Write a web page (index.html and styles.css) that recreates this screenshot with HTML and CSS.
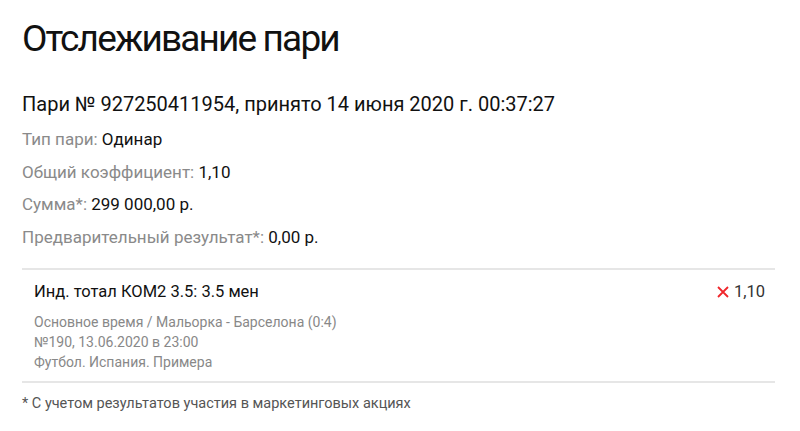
FILE: index.html
```html
<!DOCTYPE html>
<html lang="ru">
<head>
    <meta charset="UTF-8">
    <title>Отслеживание пари</title>
    <link rel="stylesheet" href="styles.css">
</head>
<body>
    <div class="page">
        <h1 class="title">Отслеживание пари</h1>

        <p class="bet-number">Пари № 927250411954, принято 14 июня 2020 г. 00:37:27</p>

        <ul class="info">
            <li><span class="label">Тип пари:</span> Одинар</li>
            <li><span class="label">Общий коэффициент:</span> 1,10</li>
            <li><span class="label">Сумма*:</span> 299 000,00 р.</li>
            <li><span class="label">Предварительный результат*:</span> 0,00 р.</li>
        </ul>

        <div class="event">
            <div class="event-head">
                <span class="event-name">Инд. тотал КОМ2 3.5: 3.5 мен</span>
                <span class="event-odds">
                    <svg class="lost" width="14" height="14" viewBox="0 0 14 14">
                        <path d="M2 2 L12 12 M12 2 L2 12" stroke="#f0262b" stroke-width="1.8" fill="none"/>
                    </svg>
                    1,10
                </span>
            </div>
            <div class="event-details">
                <div>Основное время / Мальорка - Барселона (0:4)</div>
                <div>№190, 13.06.2020 в 23:00</div>
                <div>Футбол. Испания. Примера</div>
            </div>
        </div>

        <p class="note">* С учетом результатов участия в маркетинговых акциях</p>
    </div>
</body>
</html>
```

FILE: styles.css
```css
* {
    margin: 0;
    padding: 0;
    box-sizing: border-box;
}

body {
    font-family: Roboto, "Noto Sans", sans-serif;
    background: white;
    color: #1a1a1a;
}

.page {
    width: 753px;
    margin-left: 22px;
    padding-top: 17px;
}

/* Page title */
.title {
    font-size: 37px;
    font-weight: 400;
    line-height: 44px;
    letter-spacing: -1.85px;
    color: #111;
}

.bet-number {
    margin-top: 31px;
    font-size: 20px;
    line-height: 24px;
    color: #111;
}

/* Bet info rows */
.info {
    list-style-type: none;
    margin-top: 7px;
}

.info li {
    font-size: 17px;
    line-height: 32.7px;
    color: #111;
}

.info .label {
    color: #8a8a8a;
}

/* Event card */
.event {
    margin-top: 14px;
    border-top: 2px solid #e6e6e6;
    border-bottom: 2px solid #e6e6e6;
    padding: 10px 10px 9px 12px;
}

.event-head {
    display: flex;
    justify-content: space-between;
    align-items: center;
    font-size: 16.5px;
    line-height: 24px;
    color: #111;
}

.event-odds {
    display: flex;
    align-items: center;
    gap: 4px;
    color: #333;
}

.event-details {
    margin-top: 8px;
    font-size: 14px;
    line-height: 20px;
    color: #888;
}

.note {
    margin-top: 11px;
    font-size: 14.5px;
    line-height: 20px;
    color: #555;
}
```
